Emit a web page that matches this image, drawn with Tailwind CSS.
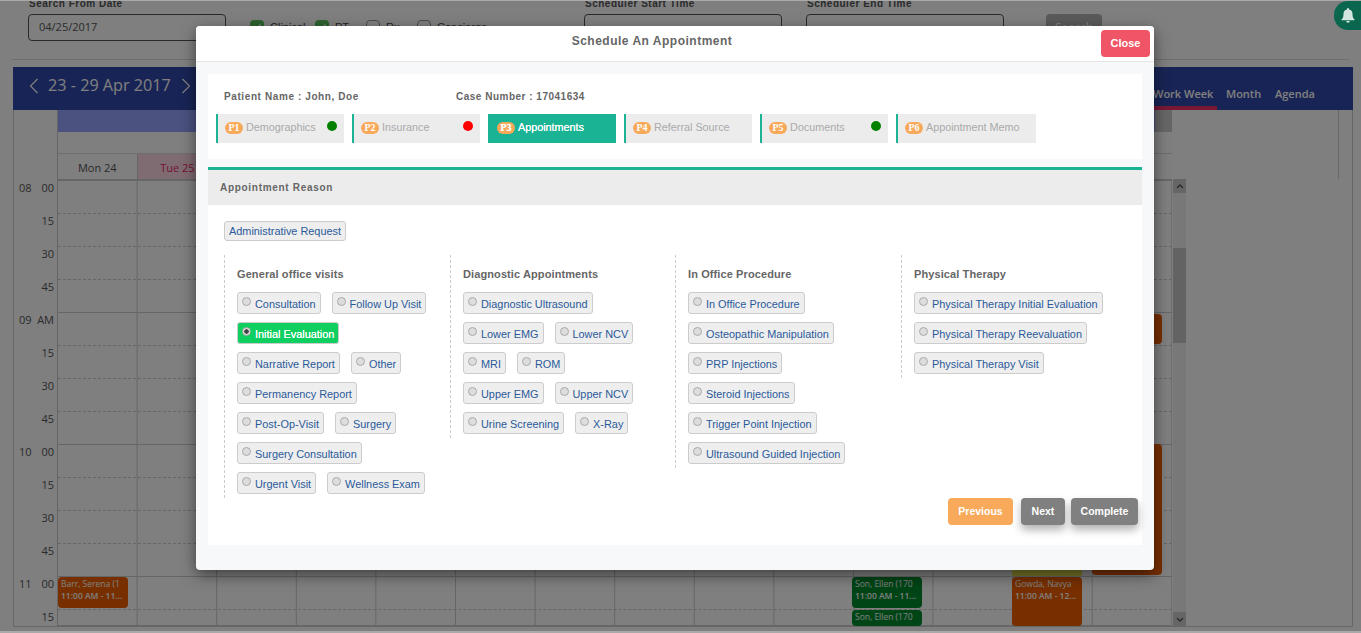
<!DOCTYPE html>
<html lang="en">
<head>
  <meta charset="UTF-8" />
  <title>Schedule An Appointment</title>
  <script src="https://cdn.jsdelivr.net/npm/@tailwindcss/browser@4"></script>
</head>
<body class="relative h-[633px] w-[1361px] overflow-hidden bg-white font-['Open_Sans',sans-serif] text-[#555]">

  <!-- page behind the dialog -->
  <div class="h-[60px] border-b border-[#ddd] mx-3 relative">
    <div class="flex h-[60px] text-[11px]">
      <div class="ml-4 w-[198px] -mt-[4px]">
        <div class="leading-4 text-[#555] font-['Liberation_Sans',sans-serif] font-bold text-[10px] tracking-[0.5px] pl-[1px] whitespace-nowrap">Search From Date</div>
        <div class="mt-[2px] h-[27px] border border-[#555] rounded flex items-center px-[10px] text-[#555]">04/25/2017</div>
      </div>
      <div class="ml-6 mt-[20px] flex font-['Liberation_Sans',sans-serif] text-[#444] leading-[14px]">
        <span class="flex items-center justify-center w-[14px] h-[14px] bg-[#58c45c] rounded-sm"><svg width="10" height="10" viewBox="0 0 10 10" fill="none" stroke="#fff" stroke-width="1.500"><path d="M1.500 5l2.500 2.500 4.500-5"/></svg></span><span class="ml-[6px] w-[45px]">Clinical</span>
        <span class="flex items-center justify-center w-[14px] h-[14px] bg-[#58c45c] rounded-sm"><svg width="10" height="10" viewBox="0 0 10 10" fill="none" stroke="#fff" stroke-width="1.500"><path d="M1.500 5l2.500 2.500 4.500-5"/></svg></span><span class="ml-[6px] w-[31px]">PT</span>
        <span class="w-[14px] h-[14px] border border-[#999] rounded-sm"></span><span class="ml-[6px] w-[31px]">Rx</span>
        <span class="w-[14px] h-[14px] border border-[#999] rounded-sm"></span><span class="ml-[6px]">Concierge</span>
      </div>
    </div>
    <div class="absolute left-[572px] top-0 flex text-[11px]">
      <div class="w-[198px] -mt-[4px]">
        <div class="leading-4 text-[#555] font-['Liberation_Sans',sans-serif] font-bold text-[10px] tracking-[0.5px] pl-[1px] whitespace-nowrap">Scheduler Start Time</div>
        <div class="mt-[2px] h-[27px] border border-[#555] rounded"></div>
      </div>
      <div class="ml-6 w-[198px] -mt-[4px]">
        <div class="leading-4 text-[#555] font-['Liberation_Sans',sans-serif] font-bold text-[10px] tracking-[0.5px] pl-[1px] whitespace-nowrap">Scheduler End Time</div>
        <div class="mt-[2px] h-[27px] border border-[#555] rounded"></div>
      </div>
      <div class="ml-[42px] mt-[14px] w-[56px] h-[27px] bg-[#b4b4b4] rounded-sm text-white text-center text-[12px] leading-[27px]">Search</div>
    </div>
  </div>

  <div class="mx-[13px] mt-[7px] h-[560px] w-[1340px] border border-[#ccc] border-t-0">
    <div class="flex h-[43px] bg-[#3149ab] text-white -ml-[1px] -mr-[1px] justify-between">
      <div class="flex items-center pl-[16px] gap-[9px] pb-[6px]">
        <svg width="10" height="16" viewBox="0 0 10 16" fill="none" stroke="#fff" stroke-width="1.200"><path d="M8.500 1 1.500 8l7 7"/></svg>
        <span class="text-[16.200px] leading-none">23 - 29 Apr 2017</span>
        <svg class="ml-[1px]" width="10" height="16" viewBox="0 0 10 16" fill="none" stroke="#fff" stroke-width="1.200"><path d="M1.500 1l7 7-7 7"/></svg>
      </div>
      <div class="flex text-[11px] font-semibold pr-[38px] whitespace-nowrap">
        <span class="h-[43px] pt-[19px] w-[70px] border-b-[4px] border-[#f0306a] pl-[6px]">Work Week</span>
        <span class="ml-[9px] pt-[19px] w-[34px]">Month</span>
        <span class="ml-[15px] pt-[19px] w-[40px]">Agenda</span>
      </div>
    </div>
    <div class="flex h-[71px]">
      <div class="w-[43px]"></div>
      <div class="w-[1115px] border-l border-[#ccc]">
        <div class="h-[22px] bg-[#97a5ff] flex justify-end"><div class="w-[17px] bg-[#cccccc]"></div></div>
        <div class="h-[22px] border-b border-[#ddd]"></div>
        <div class="flex h-[27px] text-[11px] text-[#555] border-b-2 border-[#ccc]">
          <div class="w-[79.600px] flex items-center justify-center pt-[3px] border-r border-[#ccc]">Mon 24</div>
          <div class="w-[79.600px] flex items-center justify-center pt-[3px] bg-[#ffd9e4] text-[#e91e63]">Tue 25</div>
        </div>
      </div>
      <div class="ml-[166px] w-[1px] h-[69px] bg-[#ccc]"></div>
    </div>
    <div class="flex h-[446px]">
      <div class="w-[43px] text-[11px] text-[#555] leading-[13px]">
        <div class="h-[33px] flex justify-between pl-[5px] pr-[3px]"><span>08</span><span>00</span></div>
        <div class="h-[33px] text-right pr-[3px]">15</div>
        <div class="h-[33px] text-right pr-[3px]">30</div>
        <div class="h-[33px] text-right pr-[3px]">45</div>
        <div class="h-[33px] flex justify-between pl-[5px] pr-[3px]"><span>09</span><span>AM</span></div>
        <div class="h-[33px] text-right pr-[3px]">15</div>
        <div class="h-[33px] text-right pr-[3px]">30</div>
        <div class="h-[33px] text-right pr-[3px]">45</div>
        <div class="h-[33px] flex justify-between pl-[5px] pr-[3px]"><span>10</span><span>00</span></div>
        <div class="h-[33px] text-right pr-[3px]">15</div>
        <div class="h-[33px] text-right pr-[3px]">30</div>
        <div class="h-[33px] text-right pr-[3px]">45</div>
        <div class="h-[33px] flex justify-between pl-[5px] pr-[3px]"><span>11</span><span>00</span></div>
        <div class="h-[33px] text-right pr-[3px]">15</div>
      </div>
      <div class="relative w-[1115px] h-[445px] border-l border-b border-[#ccc] bg-[linear-gradient(to_right,#ccc_1px,transparent_1px)] bg-[size:79.600px_100%] bg-[position:-1px_0]">
        <div class="h-[33px] border-b border-dashed border-[#ccc]"></div>
        <div class="h-[33px] border-b border-dashed border-[#ccc]"></div>
        <div class="h-[33px] border-b border-dashed border-[#ccc]"></div>
        <div class="h-[33px] border-b border-[#ccc]"></div>
        <div class="h-[33px] border-b border-dashed border-[#ccc]"></div>
        <div class="h-[33px] border-b border-dashed border-[#ccc]"></div>
        <div class="h-[33px] border-b border-dashed border-[#ccc]"></div>
        <div class="h-[33px] border-b border-[#ccc]"></div>
        <div class="h-[33px] border-b border-dashed border-[#ccc]"></div>
        <div class="h-[33px] border-b border-dashed border-[#ccc]"></div>
        <div class="h-[33px] border-b border-dashed border-[#ccc]"></div>
        <div class="h-[33px] border-b border-[#ccc]"></div>
        <div class="h-[33px] border-b border-dashed border-[#ccc]"></div>
        <div class="absolute left-0 top-[396px] w-[70px] h-[31px] bg-[#f05f00] rounded-sm px-[3px] py-[1px] text-[8.500px] leading-[12px] text-white whitespace-nowrap overflow-hidden"><div>Barr, Serena (1</div><div class="font-semibold">11:00 AM - 11...</div></div>
        <div class="absolute left-[794px] top-[396px] w-[70px] h-[31px] bg-[#008a2c] rounded-sm px-[3px] py-[1px] text-[8.500px] leading-[12px] text-white whitespace-nowrap overflow-hidden"><div>Son, Ellen (170</div><div class="font-semibold">11:00 AM - 11...</div></div>
        <div class="absolute left-[794px] top-[429px] w-[70px] h-[16px] bg-[#008a2c] rounded-sm px-[3px] py-[1px] text-[8.500px] leading-[12px] text-white whitespace-nowrap overflow-hidden"><div>Son, Ellen (170</div></div>
        <div class="absolute left-[954px] top-[388px] w-[70px] h-[7px] bg-[#f0ee50]"></div>
        <div class="absolute left-[954px] top-[396px] w-[70px] h-[49px] bg-[#f05f00] rounded-sm px-[3px] py-[1px] text-[8.500px] leading-[12px] text-white whitespace-nowrap overflow-hidden"><div>Gowda, Navya</div><div class="font-semibold">11:00 AM - 12...</div></div>
        <div class="absolute left-[1034px] top-[263px] w-[70px] h-[131px] bg-[#f05f00] rounded-sm"></div>
        <div class="absolute left-[1034px] top-[133px] w-[70px] h-[30px] bg-[#f05f00] rounded-sm"></div>
      </div>
      <div class="w-[13px] h-[447px] -mt-[2px] ml-[1px] bg-[#f0f0f0] flex flex-col relative">
        <div class="h-[14px] bg-[#cdcdcd] flex items-center justify-center"><svg width="8" height="5" viewBox="0 0 8 5" fill="none" stroke="#555" stroke-width="1.300"><path d="M1 4l3-3 3 3"/></svg></div>
        <div class="h-[55px]"></div>
        <div class="h-[95px] bg-[#c6c6c6]"></div>
        <div class="flex-1"></div>
        <div class="h-[14px] bg-[#cdcdcd] flex items-center justify-center"><svg width="8" height="5" viewBox="0 0 8 5" fill="none" stroke="#555" stroke-width="1.300"><path d="M1 1l3 3 3-3"/></svg></div>
      </div>
    </div>
  </div>

  <!-- backdrop -->
  <div class="absolute inset-0 bg-black/50 border-t border-b-2 border-[#a9a9a9]"></div>

  <div class="absolute right-0 top-[1px] w-[27px] h-[29px] rounded-l-[14px] bg-[#0b6650] flex items-center justify-center">
    <svg width="14" height="15" viewBox="0 0 14 15" fill="#d5e5df"><path d="M7 0a1 1 0 0 1 1 1v.6A4.400 4.400 0 0 1 11.500 6c0 3.500 1 4.500 2 5.500v.7H.5v-.7c1-1 2-2 2-5.500A4.400 4.400 0 0 1 6 1.600V1a1 1 0 0 1 1-1zM5.200 13h3.600a1.800 1.800 0 0 1-3.600 0z"/></svg>
  </div>

  <!-- dialog -->
  <div class="absolute left-[196px] top-[26px] w-[958px] h-[544px] bg-[#f7f8fa] rounded-sm shadow-[0_5px_15px_rgba(0,0,0,0.5)] font-['Liberation_Sans',sans-serif]">
    <div class="relative h-[36px] bg-white border-b border-[#e5e5e5] rounded-t-sm">
      <h4 class="pr-[46px] pt-[1px] text-center text-[12px] font-bold text-[#666] leading-[29px] tracking-[0.5px]">Schedule An Appointment</h4>
      <button class="absolute right-[4px] top-[4px] w-[49px] h-[27px] bg-[#ef5566] rounded-sm text-white text-[11px] font-bold">Close</button>
    </div>

    <div class="mx-3 mt-3 h-[85px] bg-white">
      <div class="flex pl-4 pt-[16px] text-[10px] font-bold text-[#666] leading-[14px] tracking-[0.6px]">
        <span class="w-[232px]">Patient Name : John, Doe</span>
        <span class="tracking-[0.5px]">Case Number : 17041634</span>
      </div>
      <div class="flex gap-2 mt-[10px] ml-2 text-[10.800px] text-[#aaa]">
        <div class="relative flex items-center w-[128px] h-[29px] pl-[7px] pb-[2px] bg-[#ececec] border-l-2 border-[#1ab394]">
          <span class="mr-[3px] w-[18px] h-[12px] rounded-full bg-[#f9a95a] text-white text-center font-['Liberation_Serif',serif] font-bold text-[10px] leading-[12px]">P1</span>Demographics
          <span class="absolute right-[7px] top-[7px] w-[10px] h-[10px] rounded-full bg-[#008000]"></span>
        </div>
        <div class="relative flex items-center w-[128px] h-[29px] pl-[7px] pb-[2px] bg-[#ececec] border-l-2 border-[#1ab394]">
          <span class="mr-[3px] w-[18px] h-[12px] rounded-full bg-[#f9a95a] text-white text-center font-['Liberation_Serif',serif] font-bold text-[10px] leading-[12px]">P2</span>Insurance
          <span class="absolute right-[7px] top-[7px] w-[10px] h-[10px] rounded-full bg-[#ff0000]"></span>
        </div>
        <div class="flex items-center w-[128px] h-[29px] pl-[9px] pb-[2px] bg-[#1ab394] text-white [text-shadow:0_0_0.6px_#fff]">
          <span class="mr-[3px] w-[18px] h-[12px] rounded-full bg-[#f9a95a] text-white text-center font-['Liberation_Serif',serif] font-bold text-[10px] leading-[12px]">P3</span>Appointments
        </div>
        <div class="flex items-center w-[128px] h-[29px] pl-[7px] pb-[2px] bg-[#ececec] border-l-2 border-[#1ab394]">
          <span class="mr-[3px] w-[18px] h-[12px] rounded-full bg-[#f9a95a] text-white text-center font-['Liberation_Serif',serif] font-bold text-[10px] leading-[12px]">P4</span>Referral Source
        </div>
        <div class="relative flex items-center w-[128px] h-[29px] pl-[7px] pb-[2px] bg-[#ececec] border-l-2 border-[#1ab394]">
          <span class="mr-[3px] w-[18px] h-[12px] rounded-full bg-[#f9a95a] text-white text-center font-['Liberation_Serif',serif] font-bold text-[10px] leading-[12px]">P5</span>Documents
          <span class="absolute right-[7px] top-[7px] w-[10px] h-[10px] rounded-full bg-[#008000]"></span>
        </div>
        <div class="flex items-center w-[140px] h-[29px] pl-[7px] pb-[2px] bg-[#ececec] border-l-2 border-[#1ab394]">
          <span class="mr-[3px] w-[18px] h-[12px] rounded-full bg-[#f9a95a] text-white text-center font-['Liberation_Serif',serif] font-bold text-[10px] leading-[12px]">P6</span>Appointment Memo
        </div>
      </div>
    </div>

    <div class="mx-3 mt-2 h-[378px] border-t-[3px] border-[#1ab394] bg-white">
      <div class="h-[35px] bg-[#ececec] px-3 text-[10px] font-bold text-[#666] leading-[35px] tracking-[0.7px]">Appointment Reason</div>

      <div class="flex pl-4 pt-[16px]">
        <label class="flex items-center h-[20px] px-1 bg-[#eee] border border-[#ccc] rounded-[3px] text-[10.900px] text-[#2a5a9a]">Administrative Request</label>
      </div>

      <div class="flex mt-[14px] ml-4 text-[10.900px] text-[#2a5a9a]">
        <!-- col 1 -->
        <div class="w-[226px] h-[243px] pl-3 border-l border-dashed border-[#ccc]">
          <h5 class="text-[11px] text-[#666] font-bold leading-[14px] tracking-[0.1px] mt-[12px] mb-[11px]">General office visits</h5>
          <div class="flex flex-col gap-2">
            <div class="flex gap-[11px]">
              <label class="flex items-center h-[22px] pl-1 pr-1 pt-[2px] bg-[#eee] border border-[#ccc] rounded-[3px]"><input type="radio" class="appearance-none w-[9px] h-[9px] -mt-[5px] mr-[4px] rounded-full border border-[#aaa] bg-[#ddd]" />Consultation</label>
              <label class="flex items-center h-[22px] pl-1 pr-1 pt-[2px] bg-[#eee] border border-[#ccc] rounded-[3px]"><input type="radio" class="appearance-none w-[9px] h-[9px] -mt-[5px] mr-[4px] rounded-full border border-[#aaa] bg-[#ddd]" />Follow Up Visit</label>
            </div>
            <div class="flex">
              <label class="flex items-center h-[22px] pl-1 pr-1 pt-[2px] bg-[#0fcf60] border border-[#ccc] rounded-[3px] text-white [text-shadow:0_0_0.5px_#fff]"><input type="radio" checked class="appearance-none w-[9px] h-[9px] -mt-[5px] mr-[4px] rounded-full border border-[#aaa] bg-[radial-gradient(circle,#444_40%,#ddd_50%)]" />Initial Evaluation</label>
            </div>
            <div class="flex gap-[11px]">
              <label class="flex items-center h-[22px] pl-1 pr-1 pt-[2px] bg-[#eee] border border-[#ccc] rounded-[3px]"><input type="radio" class="appearance-none w-[9px] h-[9px] -mt-[5px] mr-[4px] rounded-full border border-[#aaa] bg-[#ddd]" />Narrative Report</label>
              <label class="flex items-center h-[22px] pl-1 pr-1 pt-[2px] bg-[#eee] border border-[#ccc] rounded-[3px]"><input type="radio" class="appearance-none w-[9px] h-[9px] -mt-[5px] mr-[4px] rounded-full border border-[#aaa] bg-[#ddd]" />Other</label>
            </div>
            <div class="flex">
              <label class="flex items-center h-[22px] pl-1 pr-1 pt-[2px] bg-[#eee] border border-[#ccc] rounded-[3px]"><input type="radio" class="appearance-none w-[9px] h-[9px] -mt-[5px] mr-[4px] rounded-full border border-[#aaa] bg-[#ddd]" />Permanency Report</label>
            </div>
            <div class="flex gap-[11px]">
              <label class="flex items-center h-[22px] pl-1 pr-1 pt-[2px] bg-[#eee] border border-[#ccc] rounded-[3px]"><input type="radio" class="appearance-none w-[9px] h-[9px] -mt-[5px] mr-[4px] rounded-full border border-[#aaa] bg-[#ddd]" />Post-Op-Visit</label>
              <label class="flex items-center h-[22px] pl-1 pr-1 pt-[2px] bg-[#eee] border border-[#ccc] rounded-[3px]"><input type="radio" class="appearance-none w-[9px] h-[9px] -mt-[5px] mr-[4px] rounded-full border border-[#aaa] bg-[#ddd]" />Surgery</label>
            </div>
            <div class="flex">
              <label class="flex items-center h-[22px] pl-1 pr-1 pt-[2px] bg-[#eee] border border-[#ccc] rounded-[3px]"><input type="radio" class="appearance-none w-[9px] h-[9px] -mt-[5px] mr-[4px] rounded-full border border-[#aaa] bg-[#ddd]" />Surgery Consultation</label>
            </div>
            <div class="flex gap-[11px]">
              <label class="flex items-center h-[22px] pl-1 pr-1 pt-[2px] bg-[#eee] border border-[#ccc] rounded-[3px]"><input type="radio" class="appearance-none w-[9px] h-[9px] -mt-[5px] mr-[4px] rounded-full border border-[#aaa] bg-[#ddd]" />Urgent Visit</label>
              <label class="flex items-center h-[22px] pl-1 pr-1 pt-[2px] bg-[#eee] border border-[#ccc] rounded-[3px]"><input type="radio" class="appearance-none w-[9px] h-[9px] -mt-[5px] mr-[4px] rounded-full border border-[#aaa] bg-[#ddd]" />Wellness Exam</label>
            </div>
          </div>
        </div>
        <!-- col 2 -->
        <div class="w-[225px] h-[183px] pl-3 border-l border-dashed border-[#ccc]">
          <h5 class="text-[11px] text-[#666] font-bold leading-[14px] tracking-[0.1px] mt-[12px] mb-[11px]">Diagnostic Appointments</h5>
          <div class="flex flex-col gap-2">
            <div class="flex">
              <label class="flex items-center h-[22px] pl-1 pr-1 pt-[2px] bg-[#eee] border border-[#ccc] rounded-[3px]"><input type="radio" class="appearance-none w-[9px] h-[9px] -mt-[5px] mr-[4px] rounded-full border border-[#aaa] bg-[#ddd]" />Diagnostic Ultrasound</label>
            </div>
            <div class="flex gap-[11px]">
              <label class="flex items-center h-[22px] pl-1 pr-1 pt-[2px] bg-[#eee] border border-[#ccc] rounded-[3px]"><input type="radio" class="appearance-none w-[9px] h-[9px] -mt-[5px] mr-[4px] rounded-full border border-[#aaa] bg-[#ddd]" />Lower EMG</label>
              <label class="flex items-center h-[22px] pl-1 pr-1 pt-[2px] bg-[#eee] border border-[#ccc] rounded-[3px]"><input type="radio" class="appearance-none w-[9px] h-[9px] -mt-[5px] mr-[4px] rounded-full border border-[#aaa] bg-[#ddd]" />Lower NCV</label>
            </div>
            <div class="flex gap-[11px]">
              <label class="flex items-center h-[22px] pl-1 pr-1 pt-[2px] bg-[#eee] border border-[#ccc] rounded-[3px]"><input type="radio" class="appearance-none w-[9px] h-[9px] -mt-[5px] mr-[4px] rounded-full border border-[#aaa] bg-[#ddd]" />MRI</label>
              <label class="flex items-center h-[22px] pl-1 pr-1 pt-[2px] bg-[#eee] border border-[#ccc] rounded-[3px]"><input type="radio" class="appearance-none w-[9px] h-[9px] -mt-[5px] mr-[4px] rounded-full border border-[#aaa] bg-[#ddd]" />ROM</label>
            </div>
            <div class="flex gap-[11px]">
              <label class="flex items-center h-[22px] pl-1 pr-1 pt-[2px] bg-[#eee] border border-[#ccc] rounded-[3px]"><input type="radio" class="appearance-none w-[9px] h-[9px] -mt-[5px] mr-[4px] rounded-full border border-[#aaa] bg-[#ddd]" />Upper EMG</label>
              <label class="flex items-center h-[22px] pl-1 pr-1 pt-[2px] bg-[#eee] border border-[#ccc] rounded-[3px]"><input type="radio" class="appearance-none w-[9px] h-[9px] -mt-[5px] mr-[4px] rounded-full border border-[#aaa] bg-[#ddd]" />Upper NCV</label>
            </div>
            <div class="flex gap-[11px]">
              <label class="flex items-center h-[22px] pl-1 pr-1 pt-[2px] bg-[#eee] border border-[#ccc] rounded-[3px]"><input type="radio" class="appearance-none w-[9px] h-[9px] -mt-[5px] mr-[4px] rounded-full border border-[#aaa] bg-[#ddd]" />Urine Screening</label>
              <label class="flex items-center h-[22px] pl-1 pr-1 pt-[2px] bg-[#eee] border border-[#ccc] rounded-[3px]"><input type="radio" class="appearance-none w-[9px] h-[9px] -mt-[5px] mr-[4px] rounded-full border border-[#aaa] bg-[#ddd]" />X-Ray</label>
            </div>
          </div>
        </div>
        <!-- col 3 -->
        <div class="w-[226px] h-[213px] pl-3 border-l border-dashed border-[#ccc]">
          <h5 class="text-[11px] text-[#666] font-bold leading-[14px] tracking-[0.1px] mt-[12px] mb-[11px]">In Office Procedure</h5>
          <div class="flex flex-col gap-2 items-start">
            <label class="flex items-center h-[22px] pl-1 pr-1 pt-[2px] bg-[#eee] border border-[#ccc] rounded-[3px]"><input type="radio" class="appearance-none w-[9px] h-[9px] -mt-[5px] mr-[4px] rounded-full border border-[#aaa] bg-[#ddd]" />In Office Procedure</label>
            <label class="flex items-center h-[22px] pl-1 pr-1 pt-[2px] bg-[#eee] border border-[#ccc] rounded-[3px]"><input type="radio" class="appearance-none w-[9px] h-[9px] -mt-[5px] mr-[4px] rounded-full border border-[#aaa] bg-[#ddd]" />Osteopathic Manipulation</label>
            <label class="flex items-center h-[22px] pl-1 pr-1 pt-[2px] bg-[#eee] border border-[#ccc] rounded-[3px]"><input type="radio" class="appearance-none w-[9px] h-[9px] -mt-[5px] mr-[4px] rounded-full border border-[#aaa] bg-[#ddd]" />PRP Injections</label>
            <label class="flex items-center h-[22px] pl-1 pr-1 pt-[2px] bg-[#eee] border border-[#ccc] rounded-[3px]"><input type="radio" class="appearance-none w-[9px] h-[9px] -mt-[5px] mr-[4px] rounded-full border border-[#aaa] bg-[#ddd]" />Steroid Injections</label>
            <label class="flex items-center h-[22px] pl-1 pr-1 pt-[2px] bg-[#eee] border border-[#ccc] rounded-[3px]"><input type="radio" class="appearance-none w-[9px] h-[9px] -mt-[5px] mr-[4px] rounded-full border border-[#aaa] bg-[#ddd]" />Trigger Point Injection</label>
            <label class="flex items-center h-[22px] pl-1 pr-1 pt-[2px] bg-[#eee] border border-[#ccc] rounded-[3px]"><input type="radio" class="appearance-none w-[9px] h-[9px] -mt-[5px] mr-[4px] rounded-full border border-[#aaa] bg-[#ddd]" />Ultrasound Guided Injection</label>
          </div>
        </div>
        <!-- col 4 -->
        <div class="w-[226px] h-[123px] pl-3 border-l border-dashed border-[#ccc]">
          <h5 class="text-[11px] text-[#666] font-bold leading-[14px] tracking-[0.1px] mt-[12px] mb-[11px]">Physical Therapy</h5>
          <div class="flex flex-col gap-2 items-start">
            <label class="flex items-center h-[22px] pl-1 pr-1 pt-[2px] bg-[#eee] border border-[#ccc] rounded-[3px]"><input type="radio" class="appearance-none w-[9px] h-[9px] -mt-[5px] mr-[4px] rounded-full border border-[#aaa] bg-[#ddd]" />Physical Therapy Initial Evaluation</label>
            <label class="flex items-center h-[22px] pl-1 pr-1 pt-[2px] bg-[#eee] border border-[#ccc] rounded-[3px]"><input type="radio" class="appearance-none w-[9px] h-[9px] -mt-[5px] mr-[4px] rounded-full border border-[#aaa] bg-[#ddd]" />Physical Therapy Reevaluation</label>
            <label class="flex items-center h-[22px] pl-1 pr-1 pt-[2px] bg-[#eee] border border-[#ccc] rounded-[3px]"><input type="radio" class="appearance-none w-[9px] h-[9px] -mt-[5px] mr-[4px] rounded-full border border-[#aaa] bg-[#ddd]" />Physical Therapy Visit</label>
          </div>
        </div>
      </div>

      <div class="flex justify-end pr-1 text-[10.500px] font-bold text-white">
        <button class="w-[65px] h-[27px] bg-[#f9a95a] rounded-sm">Previous</button>
        <button class="ml-2 w-[44px] h-[27px] bg-[#808080] rounded-sm shadow-[0_5px_8px_rgba(0,0,0,0.3)]">Next</button>
        <button class="ml-[6px] w-[67px] h-[27px] bg-[#808080] rounded-sm shadow-[0_5px_8px_rgba(0,0,0,0.3)]">Complete</button>
      </div>
    </div>
  </div>
</body>
</html>
